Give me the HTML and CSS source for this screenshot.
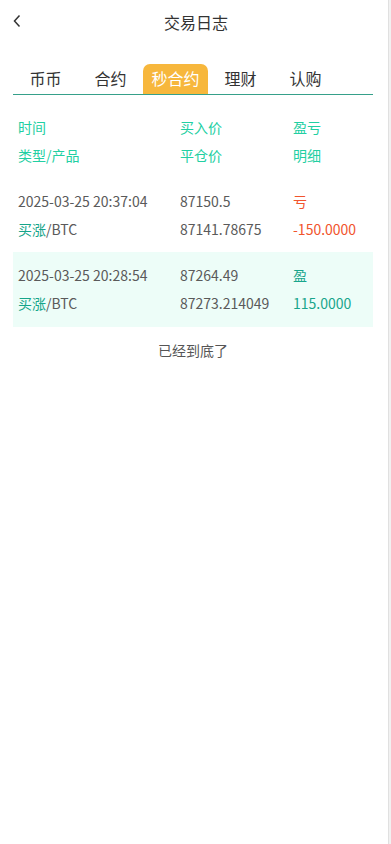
FILE: index.html
```html
<!DOCTYPE html>
<html lang="zh">
<head>
<meta charset="utf-8">
<link rel="stylesheet" href="styles.css">
</head>
<body>
<div class="page">
  <main class="main">
    <header class="nav">
      <span class="back">
        <svg width="8" height="14" viewBox="0 0 8 14"><path d="M6.5 1.5 L1.5 7 L6.5 12.5" fill="none" stroke="#333" stroke-width="1.5"/></svg>
      </span>
      <h1 class="title">交易日志</h1>
    </header>
    <nav class="tabs">
      <span class="tab">币币</span>
      <span class="tab">合约</span>
      <span class="tab active">秒合约</span>
      <span class="tab">理财</span>
      <span class="tab">认购</span>
    </nav>
    <section class="list">
      <div class="row head">
        <div class="line"><span class="c1">时间</span><span class="c2">买入价</span><span class="c3">盈亏</span></div>
        <div class="line"><span class="c1">类型/产品</span><span class="c2">平仓价</span><span class="c3">明细</span></div>
      </div>
      <div class="row item">
        <div class="line"><span class="c1">2025-03-25 20:37:04</span><span class="c2">87150.5</span><span class="c3 loss">亏</span></div>
        <div class="line"><span class="c1"><span class="up">买涨</span>/BTC</span><span class="c2">87141.78675</span><span class="c3 loss">-150.0000</span></div>
      </div>
      <div class="row item alt">
        <div class="line"><span class="c1">2025-03-25 20:28:54</span><span class="c2">87264.49</span><span class="c3 gain">盈</span></div>
        <div class="line"><span class="c1"><span class="up">买涨</span>/BTC</span><span class="c2">87273.214049</span><span class="c3 gain">115.0000</span></div>
      </div>
      <p class="end">已经到底了</p>
    </section>
  </main>
  <div class="scrollbar"></div>
</div>
</body>
</html>
```
FILE: styles.css
```css
* { box-sizing: border-box; }
html, body { margin: 0; padding: 0; }
body {
  font-family: "Noto Sans CJK SC", "Noto Sans", sans-serif;
  color: #333;
  background: #fff;
  line-height: 1.2;
}
.page {
  display: flex;
  height: 844px;
}
.main {
  flex: 1;
  padding: 0 15px 0 13px;
}
.scrollbar {
  width: 3px;
  background: #f1f1f1;
  border-left: 1px solid #e0e0e0;
}
.nav {
  position: relative;
  height: 48px;
  display: flex;
  align-items: center;
  justify-content: center;
  padding-bottom: 2px;
}
.back {
  position: absolute;
  left: 0;
  top: 14px;
  display: flex;
}
.title {
  margin: 0;
  font-size: 16px;
  font-weight: 400;
  color: #333;
  padding-left: 6px;
}
.tabs {
  margin-top: 16px;
  display: flex;
  border-bottom: 1.5px solid #36a08a;
  height: 31px;
}
.tab {
  display: flex;
  align-items: center;
  justify-content: center;
  height: 30px;
  width: 65px;
  font-size: 16px;
  color: #333;
  padding-bottom: 1px;
}
.tab.active {
  background: #f7b73c;
  color: #fff;
  border-radius: 7px 7px 0 0;
}
.list {
  padding-top: 18px;
}
.row {
  padding: 0 5px;
}
.line {
  display: flex;
  height: 28px;
  align-items: center;
  font-size: 14px;
}
.c1 { width: 162px; }
.c2 { width: 113px; }
.c3 { flex: 1; }
.head .line { color: #22cfa2; }
.head { padding-bottom: 9px; }
.item { padding-top: 9px; padding-bottom: 9px; color: #5a5a5a; }
.alt { background: #edfdf8; padding-bottom: 10px; }
.up { color: #16a58a; }
.loss { color: #f1542d; }
.gain { color: #18a58c; }
.end {
  margin: 13px 0 0;
  text-align: center;
  font-size: 14px;
  line-height: 20px;
  color: #555;
}
```
